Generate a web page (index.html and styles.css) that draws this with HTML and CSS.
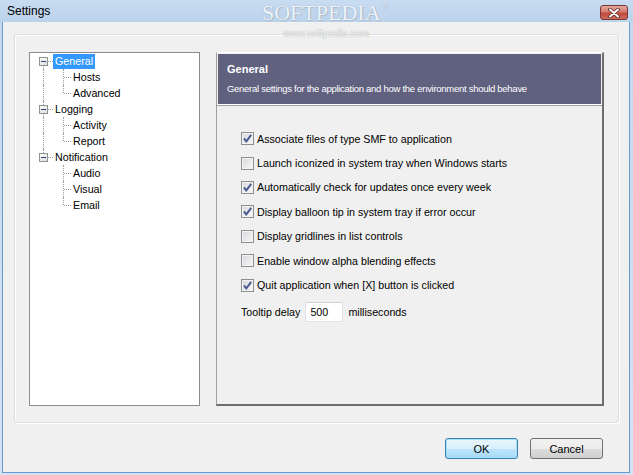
FILE: index.html
```html
<!DOCTYPE html>
<html lang="en">
<head>
  <meta charset="UTF-8" />
  <title>Settings</title>
  <link rel="stylesheet" href="styles.css">
</head>
<body>
  <div class="window">
    <!-- title bar -->
    <div class="titlebar">
      <span class="title">Settings</span>
      <button class="close" title="Close">
        <svg width="12" height="10" viewBox="0 0 12 10">
          <path d="M2 1.5 L10 8.5 M10 1.5 L2 8.5" stroke="#5a2a26" stroke-width="3.6" stroke-linecap="round"/>
          <path d="M2 1.5 L10 8.5 M10 1.5 L2 8.5" stroke="#ffffff" stroke-width="2" stroke-linecap="round"/>
        </svg>
      </button>
    </div>
    <div class="watermark">SOFTPEDIA<span class="reg">®</span></div>
    <div class="watermark-url">www.softpedia.com</div>

    <div class="client">
      <div class="group">
        <!-- tree -->
        <div class="tree">
          <div class="node root first"><span class="rail"><span class="exp"></span></span><span class="label sel">General</span></div>
          <div class="node child"><span class="rail cont"></span><span class="branch"></span><span class="label">Hosts</span></div>
          <div class="node child last"><span class="rail cont"></span><span class="branch"></span><span class="label">Advanced</span></div>
          <div class="node root"><span class="rail"><span class="exp"></span></span><span class="label">Logging</span></div>
          <div class="node child"><span class="rail cont"></span><span class="branch"></span><span class="label">Activity</span></div>
          <div class="node child last"><span class="rail cont"></span><span class="branch"></span><span class="label">Report</span></div>
          <div class="node root end"><span class="rail"><span class="exp"></span></span><span class="label">Notification</span></div>
          <div class="node child"><span class="rail"></span><span class="branch"></span><span class="label">Audio</span></div>
          <div class="node child"><span class="rail"></span><span class="branch"></span><span class="label">Visual</span></div>
          <div class="node child last"><span class="rail"></span><span class="branch"></span><span class="label">Email</span></div>
        </div>

        <!-- page -->
        <div class="panel">
          <div class="panel-head">
            <div class="head-title">General</div>
            <div class="head-desc">General settings for the application and how the environment should behave</div>
          </div>
          <div class="sep"></div>
          <div class="options">
            <label class="opt"><span class="cb on"><svg width="11" height="11" viewBox="0 0 11 11"><path d="M2 5.5 L4.3 8.3 L9.2 1.8" fill="none" stroke="#4a5c92" stroke-width="2"/></svg></span>Associate files of type SMF to application</label>
            <label class="opt"><span class="cb"></span>Launch iconized in system tray when Windows starts</label>
            <label class="opt"><span class="cb on"><svg width="11" height="11" viewBox="0 0 11 11"><path d="M2 5.5 L4.3 8.3 L9.2 1.8" fill="none" stroke="#4a5c92" stroke-width="2"/></svg></span>Automatically check for updates once every week</label>
            <label class="opt"><span class="cb on"><svg width="11" height="11" viewBox="0 0 11 11"><path d="M2 5.5 L4.3 8.3 L9.2 1.8" fill="none" stroke="#4a5c92" stroke-width="2"/></svg></span>Display balloon tip in system tray if error occur</label>
            <label class="opt"><span class="cb"></span>Display gridlines in list controls</label>
            <label class="opt"><span class="cb"></span>Enable window alpha blending effects</label>
            <label class="opt"><span class="cb on"><svg width="11" height="11" viewBox="0 0 11 11"><path d="M2 5.5 L4.3 8.3 L9.2 1.8" fill="none" stroke="#4a5c92" stroke-width="2"/></svg></span>Quit application when [X] button is clicked</label>
            <div class="delay">Tooltip delay <span class="num">500</span> milliseconds</div>
          </div>
        </div>
      </div>

      <div class="buttons">
        <button class="btn default">OK</button>
        <button class="btn">Cancel</button>
      </div>
    </div>
  </div>
</body>
</html>
```

FILE: styles.css
```css
/* base */
html, body {
  margin: 0;
  padding: 0;
  overflow: hidden;
  font-family: "Liberation Sans", Arial, sans-serif;
  font-size: 10.7px;
  color: #000;
}
.window {
  position: relative;
  width: 633px;
  height: 475px;
  box-sizing: border-box;
  padding: 0 3px 2px 2px;
  background: linear-gradient(to bottom, #c3d8ef, #d3e3f4);
  display: flex;
  flex-direction: column;
}

/* title bar */
.titlebar {
  height: 22px;
  margin: 0 -3px 0 -2px;
  display: flex;
  align-items: flex-start;
  background: linear-gradient(to bottom, #c8dcf1 0%, #bcd3ec 100%);
}
.title {
  font-size: 12px;
  margin: 4px 0 0 7px;
}
.close {
  margin: 5px 5px 0 auto;
  width: 28px;
  height: 15px;
  padding: 0;
  border: 1px solid #7a3a33;
  border-radius: 3px;
  background: linear-gradient(to bottom, #e6a89f 0%, #d47a6e 45%, #c0493c 55%, #cc6a5c 100%);
  display: flex;
  align-items: center;
  justify-content: center;
}

/* softpedia stamp */
.watermark {
  position: absolute;
  left: 262px;
  top: 3px;
  font-family: "Liberation Serif", serif;
  font-size: 22px;
  line-height: 20px;
  color: #eef3f9;
  text-shadow: 0 0 1px #8ea3b8, 1px 1px 1px #a9bccf;
}
.watermark .reg {
  font-size: 8px;
  vertical-align: top;
  line-height: 8px;
  margin-left: 1px;
}
.watermark-url {
  position: absolute;
  left: 283px;
  top: 28px;
  font-size: 10px;
  color: #f8f8f8;
  text-shadow: 0 0 1px #8a8a8a;
}

/* client area */
.client {
  flex: 1;
  background: #f0f0f0;
  border: 1px solid #6c9ad0;
  border-top: none;
  padding: 12px 9px 0 11px;
  display: flex;
  flex-direction: column;
}
.group {
  width: 605px;
  height: 389px;
  box-sizing: border-box;
  border: 1px solid #d5dfe5;
  border-radius: 3px;
  box-shadow: inset 1px 1px 0 #fff, 1px 1px 0 #fff;
  padding: 17px 14px 16px 14px;
  display: flex;
  gap: 16px;
}

/* tree view */
.tree {
  width: 171px;
  box-sizing: border-box;
  border: 1px solid #8d8d8d;
  background: #fff;
}
.node {
  display: flex;
  height: 16px;
  align-items: center;
}
.rail {
  position: relative;
  width: 18px;
  height: 16px;
  flex: none;
}
.root .rail { width: 23px; }
.rail::before {
  content: "";
  position: absolute;
  left: 13px;
  top: 0;
  bottom: 0;
  border-left: 1px dotted #a0a0a0;
  display: none;
}
.root .rail::before,
.rail.cont::before { display: block; }
.root.first .rail::before { top: 8px; }
.root.end .rail::before { bottom: 8px; }
.root .rail::after {
  content: "";
  position: absolute;
  left: 18px;
  width: 5px;
  top: 8px;
  border-top: 1px dotted #a0a0a0;
}
.exp {
  position: absolute;
  left: 9px;
  top: 4px;
  width: 9px;
  height: 9px;
  box-sizing: border-box;
  border: 1px solid #939393;
  background: linear-gradient(135deg, #ffffff, #dcdcdc);
  z-index: 1;
}
.exp::after {
  content: "";
  position: absolute;
  left: 1px;
  top: 3px;
  width: 5px;
  height: 1px;
  background: #2c3f6f;
}
.branch {
  position: relative;
  width: 23px;
  height: 16px;
  flex: none;
}
.branch::before {
  content: "";
  position: absolute;
  left: 15px;
  top: 0;
  bottom: 0;
  border-left: 1px dotted #a0a0a0;
}
.child.last .branch::before { bottom: 8px; }
.branch::after {
  content: "";
  position: absolute;
  left: 16px;
  width: 7px;
  top: 8px;
  border-top: 1px dotted #a0a0a0;
}
.label {
  padding: 0 2px;
  line-height: 15px;
  height: 15px;
}
.label.sel {
  background: #3399ff;
  color: #fff;
}

/* right page */
.panel {
  width: 388px;
  box-sizing: border-box;
  border-style: solid;
  border-width: 1px 2px 2px 1px;
  border-color: #ffffff #6e6e6e #6e6e6e #a0a0a0;
  padding: 1px 1px 0 1px;
  display: flex;
  flex-direction: column;
}
.panel-head {
  height: 50px;
  box-sizing: border-box;
  background: #60607f;
  color: #fff;
  padding: 8px 0 0 9px;
}
.head-title {
  font-weight: bold;
  font-size: 11px;
  line-height: 15px;
}
.head-desc {
  margin-top: 5px;
  font-size: 9.5px;
  letter-spacing: -0.28px;
  line-height: 14px;
}
.sep {
  margin: 0 -1px;
  border-top: 1px solid #fff;
  border-bottom: 1px solid #a0a0a0;
}
.options {
  padding: 20px 0 0 23px;
  display: flex;
  flex-direction: column;
}
.opt {
  height: 24.4px;
  box-sizing: border-box;
  display: flex;
  align-items: center;
  padding-top: 1px;
}
.cb {
  width: 13px;
  height: 13px;
  box-sizing: border-box;
  border: 1px solid #8e8f8f;
  background: linear-gradient(135deg, #d6d8dc, #f8f8f8);
  box-shadow: inset 0 0 0 1px #f2f2f2;
  margin-right: 3px;
  display: flex;
  align-items: center;
  justify-content: center;
}
.delay {
  height: 30px;
  display: flex;
  align-items: center;
}
.num {
  width: 38px;
  height: 20px;
  box-sizing: border-box;
  background: #fff;
  border: 1px solid #e2e3ea;
  border-top-color: #d0d1d7;
  padding-left: 4px;
  line-height: 18px;
  margin: 0 5px 0 5px;
}

/* dialog buttons */
.buttons {
  display: flex;
  justify-content: flex-end;
  gap: 12px;
  margin-top: 15px;
  padding-right: 17px;
}
.btn {
  width: 73px;
  height: 21px;
  padding: 0;
  font-family: "Liberation Sans", Arial, sans-serif;
  font-size: 11px;
  color: #000;
  border: 1px solid #707070;
  border-radius: 3px;
  background: linear-gradient(to bottom, #f2f2f2 0%, #ebebeb 50%, #dddddd 51%, #cfcfcf 100%);
}
.btn.default {
  border-color: #3c7fb1;
  box-shadow: inset 0 0 0 1px #a6e0fb;
  background: linear-gradient(to bottom, #eaf6fd 0%, #d9f0fc 50%, #bee6fd 51%, #a7d9f5 100%);
}
```
